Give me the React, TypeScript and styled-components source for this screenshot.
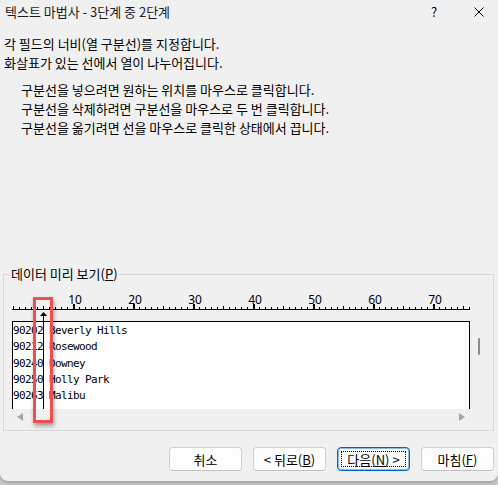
import React from 'react'
import styled, { createGlobalStyle } from 'styled-components'


const GlobalStyle = createGlobalStyle`
  html, body {
    margin: 0;
    padding: 0;
  }
  body {
    width: 498px;
    height: 485px;
    overflow: hidden;
    background: #cbcbcb;
    font-family: "Noto Sans CJK KR", "Noto Sans", sans-serif;
  }
`

const Dialog = styled.div`
  width: 498px;
  height: 481px;
  box-sizing: border-box;
  padding-bottom: 10px;

  background: #f0f0f0;
  border-radius: 0 0 8px 8px;
  box-shadow: 0 1px 4px rgba(0, 0, 0, 0.3);

  font-size: 13px;
  color: #000;

  display: flex;
  flex-direction: column;
`

const TitleBar = styled.div`
  height: 24px;
  padding-left: 5px;

  display: flex;
  align-items: center;
`

const Title = styled.div`
  flex: 1;
  line-height: 24px;
  color: #1b1b1b;
`

const HelpButton = styled.div`
  width: 38px;
  margin-right: 7px;
  text-align: center;
  line-height: 24px;
`

const CloseButton = styled.div`
  width: 38px;
  height: 24px;

  display: flex;
  align-items: center;
  justify-content: center;
`

const Intro = styled.div`
  margin-top: 10px;
  padding-left: 4px;
`

const Hints = styled.div`
  margin-top: 8px;
  padding-left: 17px;
`

const Line = styled.div`
  line-height: 19px;
  white-space: nowrap;
`

const Group = styled.fieldset`
  margin: auto 4px 0 3px;
  padding: 0 0 5px 8px;
  border: 1px solid #d9d9d9;
  min-width: 0;
`

const GroupLabel = styled.legend`
  margin-left: -2px;
  padding: 0 1px;
  line-height: 16px;
`

const Preview = styled.div`
  position: relative;
  margin-top: 10px;
`

const Ruler = styled.svg`
  display: block;
`

const PreviewBody = styled.div`
  display: flex;
`

const DataColumn = styled.div`
  width: 458px;
`

const DataBox = styled.div`
  position: relative;
  height: 86px;
  padding-top: 1px;
  box-sizing: content-box;

  background: #fff;
  border: 1px solid #000;
  border-bottom: none;
`

const DataRow = styled.div`
  height: 16.3px;
  line-height: 16px;

  font-family: "DejaVu Sans Mono", "Liberation Mono", monospace;
  font-size: 11px;
  letter-spacing: -0.62px;
  white-space: pre;
`

const ColumnBreak = styled.div`
  position: absolute;
  left: 30px;
  top: 0;
  bottom: 0;
  width: 1px;
  background: #000;
`

const HScroll = styled.div`
  height: 16px;
  padding: 0 5px;

  display: flex;
  align-items: center;
  justify-content: space-between;
`

const ScrollArrow = styled.div<{ $dir: 'left' | 'right' }>`
  width: 0;
  height: 0;
  border-top: 4px solid transparent;
  border-bottom: 4px solid transparent;
  ${({ $dir }) => $dir === 'left'
    ? 'border-right: 6px solid #a6a6a6;'
    : 'border-left: 6px solid #a6a6a6;'}
`

const VScroll = styled.div`
  width: 22px;
  padding: 17px 0 0 8px;
  box-sizing: border-box;
`

const Thumb = styled.div`
  width: 2px;
  height: 17px;
  border-radius: 1px;
  background: #8a8a8a;
`

const Marker = styled.div`
  position: absolute;
  left: 21px;
  top: 5px;
  width: 20px;
  height: 126px;
  box-sizing: border-box;

  border: 3px solid #ef4f4f;
  box-shadow: 1px 3px 4px rgba(0, 0, 0, 0.35);
  pointer-events: none;
`

const ButtonRow = styled.div`
  margin-top: 16px;
  padding-right: 4px;

  display: flex;
  justify-content: flex-end;
  gap: 11px;
`

const DialogButton = styled.button<{ $focused?: boolean }>`
  position: relative;
  width: 73px;
  height: 24px;
  padding: 0;

  background: #fdfdfd;
  border: 1px solid ${({ $focused }) => ($focused ? '#0067c0' : '#d0d0d0')};
  border-bottom-color: ${({ $focused }) => ($focused ? '#0067c0' : '#c2c2c2')};
  border-radius: 4px;
  box-shadow: ${({ $focused }) => ($focused ? 'inset 0 0 0 1px rgba(0, 103, 192, 0.45)' : 'none')};

  font-family: "Noto Sans CJK KR", "Noto Sans", sans-serif;
  font-size: 13px;
  color: #000;

  ${({ $focused }) => $focused && `
    &::after {
      content: '';
      position: absolute;
      inset: 3px;
      border: 1px dotted #000;
    }
  `}
`


const rows = [
  '90202 Beverly Hills',
  '90212 Rosewood',
  '90240 Downey',
  '90250 Holly Park',
  '90263 Malibu',
]

const ticks = Array.from({ length: 77 }, (_, i) => i)


export default function App() {
  return (
    <>
      <GlobalStyle />
      <Dialog>

        <TitleBar>
          <Title>텍스트 마법사 - 3단계 중 2단계</Title>
          <HelpButton>?</HelpButton>
          <CloseButton>
            <svg width="10" height="10" viewBox="0 0 10 10">
              <path d="M0.5 0.5 L9.5 9.5 M9.5 0.5 L0.5 9.5" stroke="#000" strokeWidth="1" />
            </svg>
          </CloseButton>
        </TitleBar>

        <Intro>
          <Line>각 필드의 너비(열 구분선)를 지정합니다.</Line>
          <Line>화살표가 있는 선에서 열이 나누어집니다.</Line>
          <Hints>
            <Line>구분선을 넣으려면 원하는 위치를 마우스로 클릭합니다.</Line>
            <Line>구분선을 삭제하려면 구분선을 마우스로 두 번 클릭합니다.</Line>
            <Line>구분선을 옮기려면 선을 마우스로 클릭한 상태에서 끕니다.</Line>
          </Hints>
        </Intro>

        <Group>
          <GroupLabel>데이터 미리 보기(<u>P</u>)</GroupLabel>
          <Preview>
            <Ruler width={460} height={29} viewBox="0 0 460 29">
              <rect x={0} y={17} width={458} height={1} fill="#000" />
              {ticks.map((i) => {
                const x = 1 + i * 6
                if (i % 10 === 0 && i > 0) {
                  return <rect key={i} x={x} y={12} width={2} height={5} fill="#000" />
                }
                const h = i % 5 === 0 ? 3 : 2
                return <rect key={i} x={x} y={17 - h} width={1} height={h} fill="#000" />
              })}
              {[10, 20, 30, 40, 50, 60, 70].map((n) => (
                <text
                  key={n}
                  x={1 + n * 6 + 2}
                  y={12}
                  textAnchor="middle"
                  fontSize={12}
                  fontFamily="Noto Sans, sans-serif"
                  fill="#000"
                >
                  {n}
                </text>
              ))}
              <path d="M31.5 20 L28 24 L35 24 Z" fill="#000" />
              <rect x={31} y={23} width={1} height={6} fill="#000" />
            </Ruler>

            <PreviewBody>
              <DataColumn>
                <DataBox>
                  {rows.map((row) => <DataRow key={row}>{row}</DataRow>)}
                  <ColumnBreak />
                </DataBox>
                <HScroll>
                  <ScrollArrow $dir="left" />
                  <ScrollArrow $dir="right" />
                </HScroll>
              </DataColumn>
              <VScroll>
                <Thumb />
              </VScroll>
            </PreviewBody>

            <Marker />
          </Preview>
        </Group>

        <ButtonRow>
          <DialogButton>취소</DialogButton>
          <DialogButton>&lt; 뒤로(<u>B</u>)</DialogButton>
          <DialogButton $focused>다음(<u>N</u>) &gt;</DialogButton>
          <DialogButton>마침(<u>F</u>)</DialogButton>
        </ButtonRow>

      </Dialog>
    </>
  )
}
